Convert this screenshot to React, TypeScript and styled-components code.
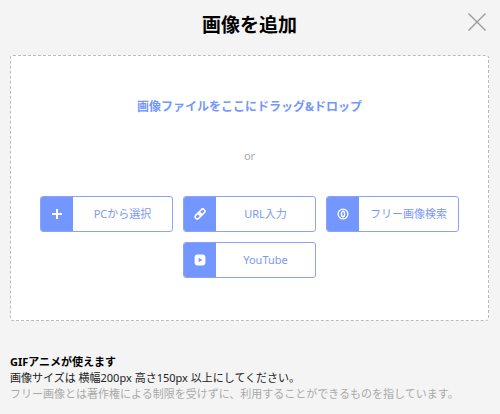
import React from "react";
import styled, { createGlobalStyle } from "styled-components";

const GlobalStyle = createGlobalStyle`
  *, *::before, *::after { box-sizing: border-box; }
  body {
    margin: 0;
    background: #f4f4f4;
    color: #000;
    font-family: "Noto Sans", "Noto Sans CJK JP", sans-serif;
    font-size: 11px;
    line-height: 16px;
  }
`;

const Dialog = styled.main`
  padding: 0 11px 12px 10px;
`;

const Header = styled.header`
  display: grid;
  grid-template-columns: 24px 1fr 24px;
  align-items: center;
  height: 54px;
  padding-bottom: 8px;
`;

const Title = styled.h1`
  grid-column: 2;
  margin: 0;
  padding-top: 4px;
  text-align: center;
  font-size: 19px;
  line-height: 28px;
  font-weight: 700;
`;

const CloseButton = styled.button`
  display: flex;
  justify-content: center;
  padding: 0;
  border: 0;
  background: none;
  cursor: pointer;
`;

const DropZone = styled.section`
  display: flex;
  flex-direction: column;
  align-items: center;
  margin-top: 1px;
  padding: 42px 20px;
  border: 1px dashed #bbb;
  border-radius: 3px;
  background: #fff;
`;

const DropLabel = styled.p`
  margin: 0;
  color: #7396ff;
  font-size: 12px;
  line-height: 18px;
  font-weight: 700;
`;

const Separator = styled.p`
  margin: 32px 0;
  color: #aaa;
`;

const Sources = styled.div`
  display: flex;
  flex-wrap: wrap;
  justify-content: center;
  gap: 10px;
`;

const SourceButton = styled.button`
  display: flex;
  width: 133px;
  height: 36px;
  padding: 0;
  overflow: hidden;
  border: 1px solid #8ba4f8;
  border-radius: 3px;
  background: #fff;
  color: #7b98f8;
  font: inherit;
  cursor: pointer;
`;

const SourceIcon = styled.span`
  display: flex;
  flex: 0 0 32px;
  align-items: center;
  justify-content: center;
  align-self: stretch;
  background: #7396ff;
  color: #fff;
`;

const SourceLabel = styled.span`
  flex: 1;
  align-self: center;
  text-align: center;
  white-space: nowrap;
`;

const Notes = styled.footer`
  margin-top: 33px;
`;

const Note = styled.p<{ $tone?: "strong" | "muted" }>`
  margin: 0;
  color: ${({ $tone }) => ($tone === "muted" ? "#aaa" : $tone === "strong" ? "#000" : "#222")};
  font-weight: ${({ $tone }) => ($tone === "strong" ? 700 : 400)};
`;

const PlusIcon = () => (
  <svg width="12" height="12" viewBox="0 0 12 12" aria-hidden="true">
    <path d="M6 1v10M1 6h10" stroke="currentColor" strokeWidth="2" />
  </svg>
);

const LinkIcon = () => (
  <svg width="12" height="12" viewBox="0 0 12 12" aria-hidden="true">
    <g fill="none" stroke="currentColor" strokeWidth="1.7" transform="rotate(-45 6 6)">
      <rect x="0" y="3.9" width="7" height="4.2" rx="2.1" />
      <rect x="5" y="3.9" width="7" height="4.2" rx="2.1" />
    </g>
  </svg>
);

const FreeIcon = () => (
  <svg width="12" height="12" viewBox="0 0 12 12" aria-hidden="true">
    <g fill="none" stroke="currentColor">
      <circle cx="6" cy="6" r="4.9" strokeWidth="1.3" />
      <ellipse cx="6" cy="6" rx="1.6" ry="2.7" strokeWidth="1.4" />
    </g>
  </svg>
);

const VideoIcon = () => (
  <svg width="12" height="12" viewBox="0 0 12 12" aria-hidden="true">
    <rect x="0.6" y="0.6" width="10.8" height="10.8" rx="2.8" fill="currentColor" />
    <path d="M4.7 3.8 8.3 6 4.7 8.2z" fill="#7396ff" />
  </svg>
);

const sources = [
  { label: "PCから選択", Icon: PlusIcon },
  { label: "URL入力", Icon: LinkIcon },
  { label: "フリー画像検索", Icon: FreeIcon },
  { label: "YouTube", Icon: VideoIcon },
];

export default function App() {
  return (
    <>
      <GlobalStyle />
      <Dialog lang="ja">
        <Header>
          <Title>画像を追加</Title>
          <CloseButton type="button" aria-label="閉じる">
            <svg width="20" height="20" viewBox="0 0 20 20" aria-hidden="true">
              <path d="M1.5 0.5l17 17M18.5 0.5l-17 17" stroke="#999" strokeWidth="1.3" />
            </svg>
          </CloseButton>
        </Header>
        <DropZone>
          <DropLabel>画像ファイルをここにドラッグ&amp;ドロップ</DropLabel>
          <Separator>or</Separator>
          <Sources>
            {sources.map(({ label, Icon }) => (
              <SourceButton type="button" key={label}>
                <SourceIcon>
                  <Icon />
                </SourceIcon>
                <SourceLabel>{label}</SourceLabel>
              </SourceButton>
            ))}
          </Sources>
        </DropZone>
        <Notes>
          <Note $tone="strong">GIFアニメが使えます</Note>
          <Note>画像サイズは 横幅200px 高さ150px 以上にしてください。</Note>
          <Note $tone="muted">
            フリー画像とは著作権による制限を受けずに、利用することができるものを指しています。
          </Note>
        </Notes>
      </Dialog>
    </>
  );
}
